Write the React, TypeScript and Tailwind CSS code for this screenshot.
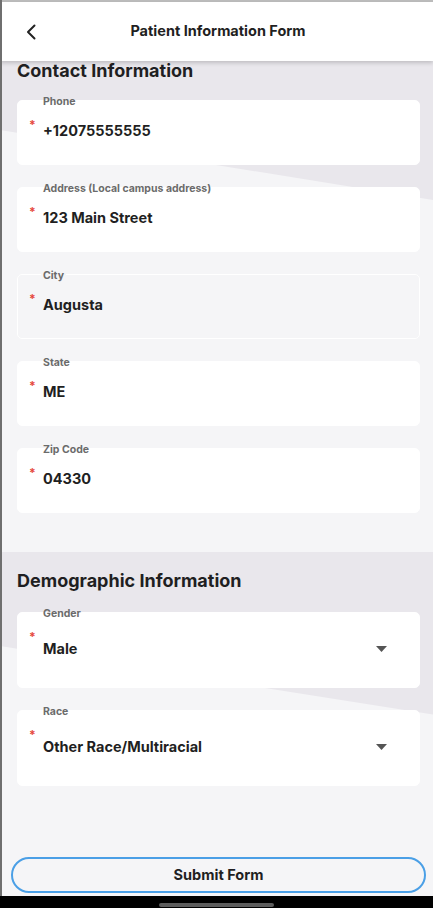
import React from 'react';

const FONT = { fontFamily: 'Inter, "Noto Sans", Arial, sans-serif' };

type FieldProps = {
  label: string;
  value: string;
  disabled?: boolean;
  select?: boolean;
};

function Field({ label, value, disabled, select }: FieldProps) {
  return (
    <div
      className={
        'relative rounded-[5px] border border-white ' +
        (select ? 'h-[76px] ' : 'h-[65px] ') +
        (disabled ? 'bg-transparent' : 'bg-white')
      }
    >
      <span
        className={
          'absolute left-[23px] -top-[5px] px-[2px] text-[10.5px] leading-[12px] font-bold text-[#6b6b6b] ' +
          (disabled ? 'bg-[#f5f5f7]' : '')
        }
      >
        {label}
      </span>
      <span className="absolute left-[11px] top-[19px] text-[12px] leading-[10px] font-bold text-[#e5483d]">*</span>
      <div
        className={
          'flex items-center pl-[25px] pr-[32px] ' + (select ? 'pt-[26px]' : 'pt-[20px]')
        }
      >
        <span className="flex-1 text-[14.5px] leading-[20px] font-bold text-[#1f1f22]">{value}</span>
        {select && (
          <svg width="11" height="6" viewBox="0 0 11 6">
            <path d="M0 0 H11 L5.5 6 Z" fill="#555" />
          </svg>
        )}
      </div>
    </div>
  );
}

function SectionBg({ y1, y2, h }: { y1: number; y2: number; h: number }) {
  // darker wedge above a slanted line, lighter below
  return (
    <svg className="absolute inset-0 w-full h-full" viewBox={`0 0 433 ${h}`} preserveAspectRatio="none">
      <rect x="0" y="0" width="433" height={h} fill="#f5f5f7" />
      <polygon points={`0,0 433,0 433,${y2} 0,${y1}`} fill="#e9e7ec" />
    </svg>
  );
}

export default function App() {
  return (
    <div className="w-[433px] h-[908px] overflow-hidden flex flex-col bg-[#f5f5f7] relative" style={FONT}>
      <div className="h-[2px] bg-[#bdbdbd] shrink-0" />

      {/* Header */}
      <div className="relative z-20 h-[59px] shrink-0 bg-white flex items-center justify-center shadow-[0_2px_4px_rgba(0,0,0,0.18)]">
        <button className="absolute left-[24px] top-[20px] w-[14px] h-[20px] flex items-center justify-center">
          <svg width="10" height="16" viewBox="0 0 10 16">
            <path d="M8.5 1.5 L2 8 L8.5 14.5" fill="none" stroke="#222" strokeWidth="2" strokeLinecap="round" strokeLinejoin="round" />
          </svg>
        </button>
        <h1 className="text-[14.5px] font-bold text-[#1f1f22] pb-[1px] pl-[3px]">Patient Information Form</h1>
      </div>

      {/* Content */}
      <div className="flex-1 flex flex-col overflow-hidden">
        <section className="relative h-[491px] shrink-0 pl-[17px] pr-[13px]">
          <SectionBg y1={69} y2={139} h={491} />
          <div className="relative">
            <h2 className="-mt-[1px] text-[18px] leading-[22px] font-bold text-[#1f1f22]">Contact Information</h2>
            <div className="mt-[18px] flex flex-col gap-[22px]">
              <Field label="Phone" value="+12075555555" />
              <Field label="Address (Local campus address)" value="123 Main Street" />
              <Field label="City" value="Augusta" disabled />
              <Field label="State" value="ME" />
              <Field label="Zip Code" value="04330" />
            </div>
          </div>
        </section>

        <section className="relative flex-1 pl-[17px] pr-[13px]">
          <SectionBg y1={93} y2={161} h={300} />
          <div className="relative pt-[18px]">
            <h2 className="text-[18px] leading-[22px] font-bold text-[#1f1f22]">Demographic Information</h2>
            <div className="mt-[20px] flex flex-col gap-[22px]">
              <Field label="Gender" value="Male" select />
              <Field label="Race" value="Other Race/Multiracial" select />
            </div>
          </div>
        </section>

        <div className="shrink-0 px-[11px] pb-[3px] pt-[2px]">
          <button className="w-[415px] h-[36px] rounded-full border-2 border-[#4a9fe6] text-[14.5px] font-bold text-[#1f1f22]">
            Submit Form
          </button>
        </div>
      </div>

      <div className="h-[12px] shrink-0 bg-black flex justify-center pt-[7px]">
        <div className="w-[115px] h-[4px] rounded-full bg-[#5c5c5c]" />
      </div>

      <div className="absolute left-0 top-0 bottom-[12px] w-[2px] bg-[#6f6f6f] z-30" />
    </div>
  );
}
